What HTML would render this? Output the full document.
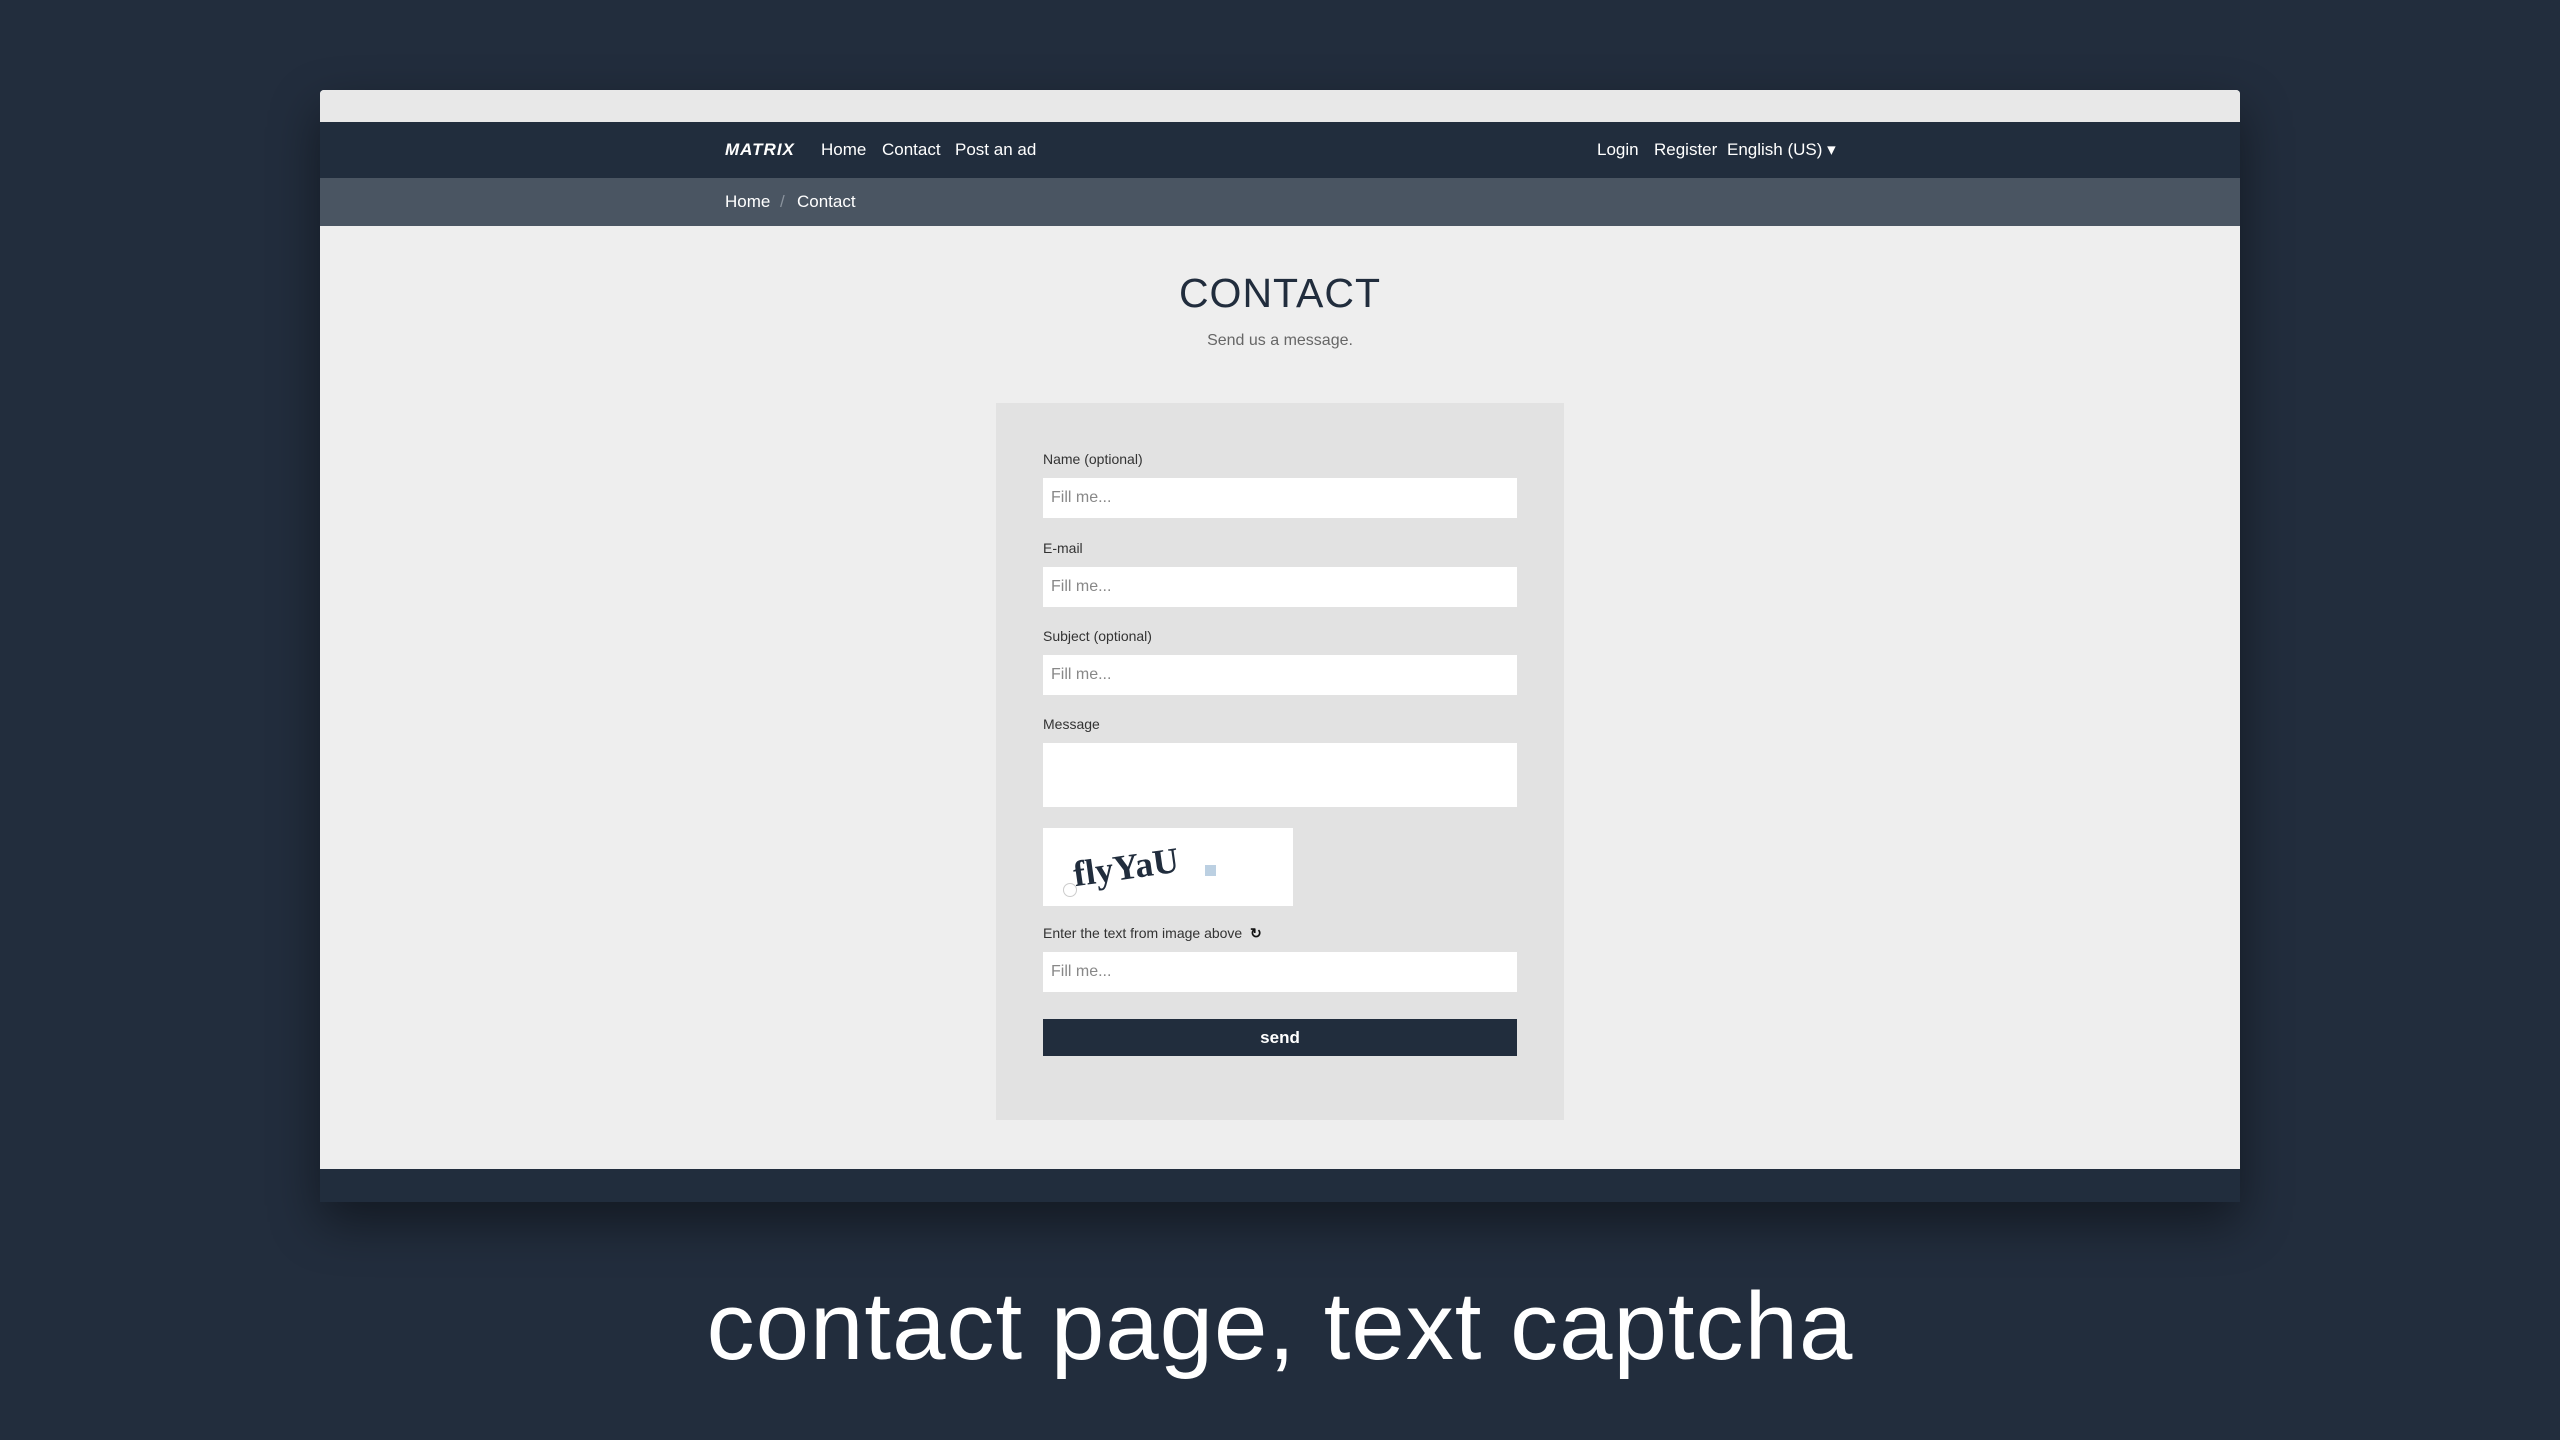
<!DOCTYPE html>
<html><head><meta charset="utf-8"><style>
*{margin:0;padding:0;box-sizing:border-box}
body{width:2560px;height:1440px;background:#222d3d;font-family:"Liberation Sans",sans-serif;position:relative;overflow:hidden}
.win{position:absolute;left:320px;top:90px;width:1920px;height:1112px;background:#eeeeee;box-shadow:0 20px 50px rgba(0,0,0,.45);border-radius:4px 4px 0 0;overflow:hidden}
.top{height:32px;background:#e8e8e8}
.nav{height:56px;background:#212d3d;position:relative;color:#fff;font-size:17px}
.nav span{position:absolute;top:18px;white-space:nowrap}
.crumb{height:48px;background:#4a5562;position:relative;color:#fff;font-size:17px}
.crumb span{position:absolute;top:14px}
h1{position:absolute;top:180px;left:0;width:1920px;text-align:center;font-weight:normal;font-size:41px;color:#212d3d;letter-spacing:1px}
.sub{position:absolute;top:242px;width:1920px;text-align:center;font-size:16px;color:#666}
.box{position:absolute;left:676px;top:313px;width:568px;height:717px;background:#e2e2e2}
.lbl{position:absolute;left:47px;font-size:14px;color:#333;white-space:nowrap}
.in{position:absolute;left:47px;width:474px;height:40px;background:#fff;color:#888;font-size:16px;padding:11px 8px}
.btn{position:absolute;left:47px;top:616px;width:474px;height:37px;background:#212d3d;color:#fff;font-size:17px;font-weight:bold;text-align:center;line-height:37px}
.foot{position:absolute;left:0;top:1079px;width:1920px;height:33px;background:#212d3d}
.cap{position:absolute;top:1272px;width:2560px;text-align:center;color:#fff;font-size:96px;letter-spacing:1px}
</style></head><body>
<div class="win">
<div class="top"></div>
<div class="nav">
<span style="left:405px;font-weight:bold;font-style:italic;letter-spacing:1px">MATRIX</span>
<span style="left:501px">Home</span>
<span style="left:562px">Contact</span>
<span style="left:635px">Post an ad</span>
<span style="left:1277px">Login</span>
<span style="left:1334px">Register</span>
<span style="left:1407px">English (US) ▾</span>
</div>
<div class="crumb"><span style="left:405px">Home</span><span style="left:460px;color:#8a939d">/</span><span style="left:477px">Contact</span></div>
<h1>CONTACT</h1>
<div class="sub">Send us a message.</div>
<div class="box">
<div class="lbl" style="top:48px">Name (optional)</div>
<div class="in" style="top:75px">Fill me...</div>
<div class="lbl" style="top:137px">E-mail</div>
<div class="in" style="top:164px">Fill me...</div>
<div class="lbl" style="top:225px">Subject (optional)</div>
<div class="in" style="top:252px">Fill me...</div>
<div class="lbl" style="top:313px">Message</div>
<div class="in" style="top:340px;height:64px"></div>
<div style="position:absolute;left:47px;top:425px;width:250px;height:78px;background:#fff;overflow:hidden">
<div style="position:absolute;left:30px;top:18px;font-family:'Liberation Serif',serif;font-weight:bold;font-size:36px;color:#212d3d;transform:rotate(-8deg)">flyYaU</div>
<div style="position:absolute;left:162px;top:37px;width:11px;height:11px;background:#bcd0e2"></div>
<div style="position:absolute;left:20px;top:55px;width:14px;height:14px;border:1px solid #ccc;border-radius:50%"></div>
</div>
<div class="lbl" style="top:522px">Enter the text from image above &nbsp;<b style="color:#111">↻</b></div>
<div class="in" style="top:549px">Fill me...</div>
<div class="btn">send</div>
</div>
<div class="foot"></div>
</div>
<div class="cap">contact page, text captcha</div>
</body></html>
